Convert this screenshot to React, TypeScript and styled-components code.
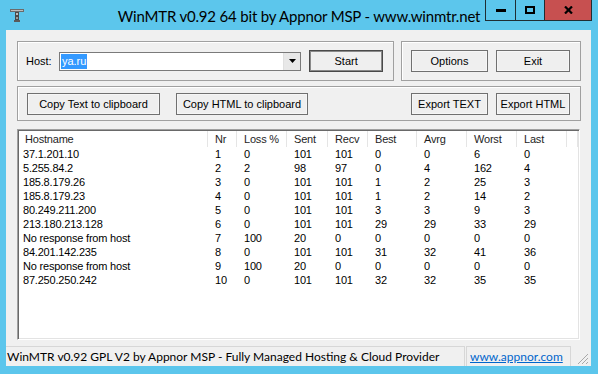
import React from "react";
import styled, { createGlobalStyle } from "styled-components";

const Global = createGlobalStyle`
  html, body { margin: 0; padding: 0; background: #5cc6ec; }
  body { font-family: "Liberation Sans", Arial, sans-serif; }
`;

const Window = styled.div`
  width: 598px;
  height: 374px;
  background: #5cc6ec;
  display: flex;
  flex-direction: column;
  overflow: hidden;
`;

const TitleBar = styled.div`
  height: 30px;
  display: grid;
  grid-template-columns: 1fr auto 1fr;
  align-items: center;
`;

const IconBox = styled.div`
  padding-left: 10px;
  display: flex;
  align-items: center;
`;

const Title = styled.div`
  font-family: Lato, "Open Sans", sans-serif;
  font-size: 15px;
  letter-spacing: -0.18px;
  color: #000;
  white-space: nowrap;
  padding-top: 1px;
`;

const Controls = styled.div`
  justify-self: end;
  align-self: start;
  display: flex;
  margin-right: 6px;
`;

const CtrlBtn = styled.div<{ $w: number; $close?: boolean }>`
  width: ${(p) => p.$w}px;
  height: 20px;
  border: 1px solid #1f2d33;
  border-top: none;
  margin-left: -1px;
  background: ${(p) => (p.$close ? "#c75050" : "transparent")};
  display: flex;
  align-items: center;
  justify-content: center;
`;

const Client = styled.div`
  margin: 0 7px 0 6px;
  height: 336px;
  background: #f0f0f0;
  display: flex;
  flex-direction: column;
`;

const Content = styled.div`
  padding: 11px 0 0 11px;
  display: flex;
  flex-direction: column;
`;

const TopRow = styled.div`
  display: flex;
  gap: 7px;
`;

const Group = styled.div<{ $w: number; $h: number }>`
  box-sizing: border-box;
  width: ${(p) => p.$w}px;
  height: ${(p) => p.$h}px;
  border: 1px solid #a0a0a0;
  box-shadow: inset 1px 1px 0 #ffffff;
  display: flex;
  align-items: center;
  padding: 0 10px 0 9px;
`;

const Label = styled.span`
  font-size: 11px;
  width: 33px;
  margin-left: -1px;
  color: #000;
`;

const Combo = styled.div`
  box-sizing: border-box;
  width: 243px;
  height: 19px;
  background: #fff;
  border: 1px solid #7a7a7a;
  display: flex;
  align-items: center;
  padding-left: 1px;
`;

const Selected = styled.span`
  background: #3399ff;
  color: #fff;
  font-size: 11px;
  line-height: 15px;
  padding: 0 1px;
`;

const DropBtn = styled.div`
  margin-left: auto;
  width: 16px;
  height: 17px;
  background: #e8e8e8;
  border-left: 1px solid #e0e0e0;
  display: flex;
  align-items: center;
  justify-content: center;
`;

const Button = styled.div<{ $w: number; $default?: boolean }>`
  box-sizing: border-box;
  width: ${(p) => p.$w}px;
  height: 22px;
  border: 1px solid ${(p) => (p.$default ? "#4a4a4a" : "#707070")};
  box-shadow: ${(p) =>
    p.$default ? "inset 0 0 0 1px #8a8a8a" : "inset 0 0 0 1px #f6f6f6"};
  background: #efefef;
  font-size: 11px;
  color: #000;
  display: flex;
  align-items: center;
  justify-content: center;
  white-space: nowrap;
`;

const List = styled.div`
  box-sizing: border-box;
  margin-top: 8px;
  width: 563px;
  height: 211px;
  background: #fff;
  border: 1px solid;
  border-color: #a0a0a0 #ffffff #ffffff #a0a0a0;
  box-shadow: inset 1px 1px 0 #696969, inset -1px -1px 0 #e3e3e3;
  padding: 1px 1px 0 1px;
  font-size: 11px;
  letter-spacing: -0.2px;
  color: #000;
`;

const cols = "189px 29px 50px 41px 40px 49px 50px 50px 50px 1fr";

const HeaderRow = styled.div`
  display: grid;
  grid-template-columns: ${cols};
  height: 16px;
`;

const HeadCell = styled.div<{ $first?: boolean }>`
  border-right: 1px solid #e5e5e5;
  padding-left: ${(p) => (p.$first ? 6 : 7)}px;
  display: flex;
  align-items: center;
  white-space: nowrap;
  overflow: hidden;
  color: #1e1e1e;
`;

const Row = styled.div`
  display: grid;
  grid-template-columns: ${cols};
  height: 14px;
  align-items: center;
`;

const Cell = styled.div<{ $first?: boolean }>`
  padding-left: ${(p) => (p.$first ? 4 : 7)}px;
  white-space: nowrap;
  line-height: 14px;
`;

const StatusBar = styled.div`
  margin-top: auto;
  height: 20px;
  display: flex;
  align-items: stretch;
  font-family: Lato, "Open Sans", sans-serif;
  font-size: 12px;
`;

const StatusPane = styled.div<{ $w: number; $boxed?: boolean }>`
  box-sizing: border-box;
  width: ${(p) => p.$w}px;
  border-top: 1px solid #d7d7d7;
  border-right: 1px solid #d7d7d7;
  border-left: ${(p) => (p.$boxed ? "1px solid #d7d7d7" : "none")};
  margin-left: ${(p) => (p.$boxed ? "1px" : "0")};
  padding-left: ${(p) => (p.$boxed ? 3 : 1)}px;
  display: flex;
  align-items: center;
  white-space: nowrap;
  overflow: hidden;
  color: #000;
`;

const Link = styled.span`
  color: #0066cc;
  text-decoration: underline;
`;

const Grip = styled.div`
  flex: 1;
  display: flex;
  align-items: flex-end;
  justify-content: flex-end;
  padding: 0 2px 1px 0;
`;

const columns = ["Hostname", "Nr", "Loss %", "Sent", "Recv", "Best", "Avrg", "Worst", "Last"];

const rows: (string | number)[][] = [
  ["37.1.201.10", 1, 0, 101, 101, 0, 0, 6, 0],
  ["5.255.84.2", 2, 2, 98, 97, 0, 4, 162, 4],
  ["185.8.179.26", 3, 0, 101, 101, 1, 2, 25, 3],
  ["185.8.179.23", 4, 0, 101, 101, 1, 2, 14, 2],
  ["80.249.211.200", 5, 0, 101, 101, 3, 3, 9, 3],
  ["213.180.213.128", 6, 0, 101, 101, 29, 29, 33, 29],
  ["No response from host", 7, 100, 20, 0, 0, 0, 0, 0],
  ["84.201.142.235", 8, 0, 101, 101, 31, 32, 41, 36],
  ["No response from host", 9, 100, 20, 0, 0, 0, 0, 0],
  ["87.250.250.242", 10, 0, 101, 101, 32, 32, 35, 35],
];

const AppIcon = () => (
  <svg width="14" height="13" viewBox="0 0 14 13">
    <rect x="0" y="0" width="14" height="3" fill="#6b6b6b" />
    <rect x="1" y="1" width="12" height="1" fill="#bdbdbd" />
    <rect x="5" y="3" width="4" height="10" fill="#4a4a4a" />
    <rect x="6" y="4" width="2" height="2" fill="#bdbdbd" />
    <rect x="6" y="8" width="2" height="2" fill="#9a9a9a" />
    <rect x="4" y="11" width="6" height="2" fill="#5a5a5a" />
  </svg>
);

export default function App() {
  return (
    <>
      <Global />
      <Window>
        <TitleBar>
          <IconBox>
            <AppIcon />
          </IconBox>
          <Title>WinMTR v0.92 64 bit by Appnor MSP - www.winmtr.net</Title>
          <Controls>
            <CtrlBtn $w={29}>
              <svg width="10" height="8" viewBox="0 0 10 8">
                <rect x="0" y="3" width="10" height="3" fill="#000" />
              </svg>
            </CtrlBtn>
            <CtrlBtn $w={28}>
              <svg width="10" height="8" viewBox="0 0 10 8">
                <rect x="1" y="1" width="8" height="6" fill="none" stroke="#000" strokeWidth="2" />
                <rect x="0" y="0" width="10" height="2" fill="#000" />
              </svg>
            </CtrlBtn>
            <CtrlBtn $w={46} $close>
              <svg width="9" height="8" viewBox="0 0 9 8">
                <path d="M1 0.5 L8 7.5 M8 0.5 L1 7.5" stroke="#000" strokeWidth="2.2" />
              </svg>
            </CtrlBtn>
          </Controls>
        </TitleBar>
        <Client>
          <Content>
            <TopRow>
              <Group $w={377} $h={40}>
                <Label>Host:</Label>
                <Combo>
                  <Selected>ya.ru</Selected>
                  <DropBtn>
                    <svg width="7" height="4" viewBox="0 0 7 4">
                      <path d="M0 0 H7 L3.5 4 Z" fill="#000" />
                    </svg>
                  </DropBtn>
                </Combo>
                <Button $w={74} $default style={{ marginLeft: 8 }}>
                  Start
                </Button>
              </Group>
              <Group $w={180} $h={40} style={{ gap: 8 }}>
                <Button $w={77}>Options</Button>
                <Button $w={74}>Exit</Button>
              </Group>
            </TopRow>
            <Group $w={564} $h={35} style={{ marginTop: 5, gap: 8 }}>
              <Button $w={133}>Copy Text to clipboard</Button>
              <Button $w={132} style={{ marginLeft: 8 }}>
                Copy HTML to clipboard
              </Button>
              <Button $w={77} style={{ marginLeft: "auto" }}>
                Export TEXT
              </Button>
              <Button $w={74}>Export HTML</Button>
            </Group>
            <List>
              <HeaderRow>
                {columns.map((c, i) => (
                  <HeadCell key={c} $first={i === 0}>
                    {c}
                  </HeadCell>
                ))}
                <HeadCell />
              </HeaderRow>
              {rows.map((r, i) => (
                <Row key={i}>
                  {r.map((v, j) => (
                    <Cell key={j} $first={j === 0}>
                      {v}
                    </Cell>
                  ))}
                </Row>
              ))}
            </List>
          </Content>
          <StatusBar>
            <StatusPane $w={459}>
              WinMTR v0.92 GPL V2 by Appnor MSP - Fully Managed Hosting &amp; Cloud Provider
            </StatusPane>
            <StatusPane $w={105} $boxed>
              <Link>www.appnor.com</Link>
            </StatusPane>
            <Grip>
              <svg width="12" height="12" viewBox="0 0 12 12">
                <path d="M11 1 L1 11 M11 5 L5 11 M11 9 L9 11" stroke="#a8a8a8" strokeWidth="1" />
              </svg>
            </Grip>
          </StatusBar>
        </Client>
      </Window>
    </>
  );
}
